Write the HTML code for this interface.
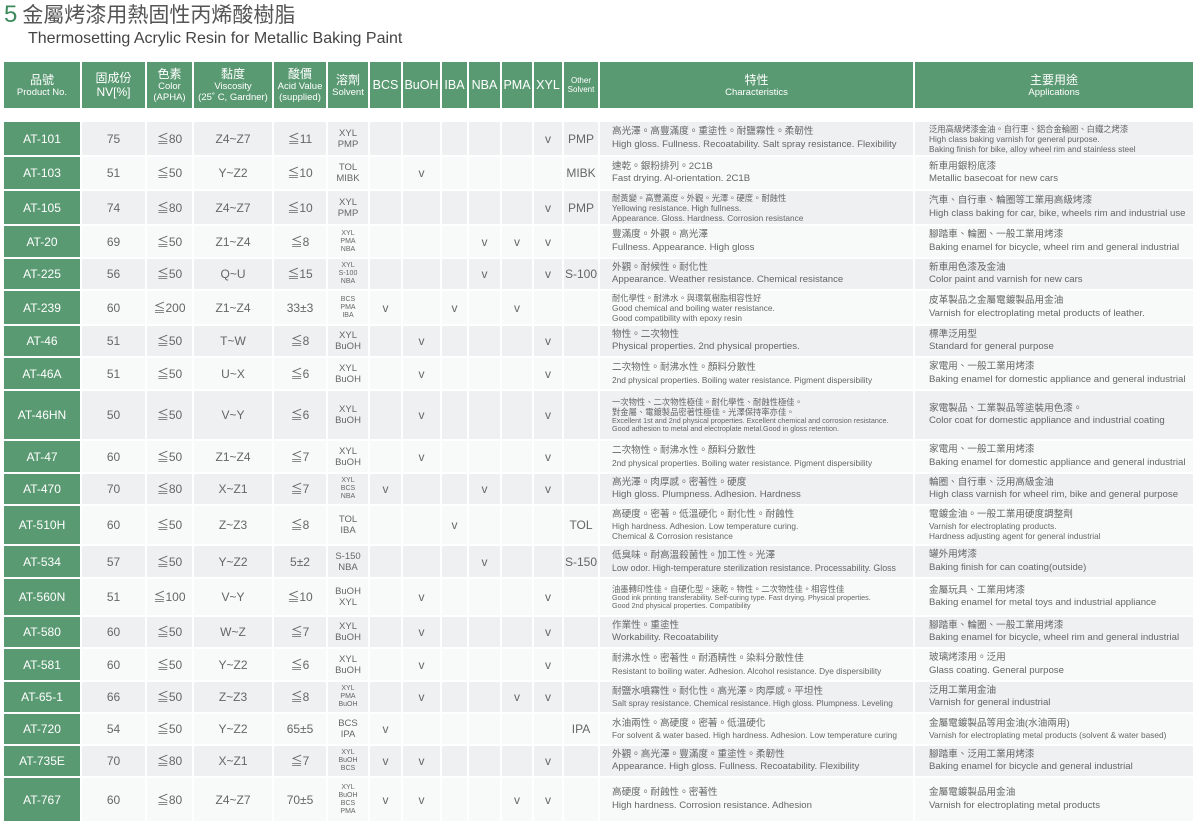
<!DOCTYPE html>
<html><head><meta charset="utf-8"><style>
*{margin:0;padding:0;box-sizing:border-box}
body{width:1200px;height:831px;background:#fff;font-family:"Liberation Sans","Noto Sans CJK TC",sans-serif;color:#666;position:relative;overflow:hidden}
.t1{position:absolute;left:4px;top:1px;font-size:21px;color:#555;white-space:nowrap;line-height:28px}
.t1 b{font-weight:normal;color:#3d8a5c;font-size:24px;margin-right:5px}
.t2{position:absolute;left:28px;top:30px;font-size:16px;color:#444;white-space:nowrap;line-height:18px}
table{position:absolute;left:2px;border-collapse:separate;border-spacing:2px;table-layout:fixed}
td{text-align:center;vertical-align:middle;font-size:12px;white-space:nowrap;overflow:hidden;line-height:14px}
#hd{top:60px}
#hd td{background:#5a9a72;color:#fff;height:46px;font-size:9.5px;line-height:11px}
#hd td .c{font-size:12px;line-height:14px;display:block}
#hd td.b{font-size:12.5px}
#bd{top:120px}
#bd tr:nth-child(odd) td{background:#eef0f1}
#bd tr:nth-child(even) td{background:#f8f9f9}
#bd td.p{background:#5a9a72 !important;color:#fff;font-size:12px}
td.sv{font-size:9.5px;line-height:11px}
td.sv.s{font-size:7px;line-height:8px}
td.ch,td.ap{text-align:left;padding-left:12px;font-size:9.6px;line-height:12.5px}
td.ap{padding-left:14px}
td div{display:block}
.sm{font-size:8.3px;line-height:10px}
.xs{font-size:7.2px;line-height:8.5px}
</style></head><body>
<div class="t1"><b>5</b>金屬烤漆用熱固性丙烯酸樹脂</div>
<div class="t2">Thermosetting Acrylic Resin for Metallic Baking Paint</div>
<table id="hd"><colgroup><col style="width:76px"><col style="width:63px"><col style="width:45px"><col style="width:78px"><col style="width:52px"><col style="width:40px"><col style="width:31px"><col style="width:37px"><col style="width:25px"><col style="width:31px"><col style="width:30px"><col style="width:28px"><col style="width:34px"><col style="width:313px"><col style="width:278px"></colgroup>
<tr><td><span class="c">品號</span>Product No.</td><td><span class="c">固成份</span><span class="c">NV[%]</span></td><td><span class="c">色素</span>Color<br>(APHA)</td><td><span class="c">黏度</span>Viscosity<br>(25˚ C, Gardner)</td><td><span class="c">酸價</span>Acid Value<br>(supplied)</td><td><span class="c">溶劑</span>Solvent</td><td class="b">BCS</td><td class="b">BuOH</td><td class="b">IBA</td><td class="b">NBA</td><td class="b">PMA</td><td class="b">XYL</td><td style="font-size:8px;line-height:9px">Other<br>Solvent</td><td><span class="c">特性</span>Characteristics</td><td><span class="c">主要用途</span>Applications</td></tr>
</table>
<table id="bd"><colgroup><col style="width:76px"><col style="width:63px"><col style="width:45px"><col style="width:78px"><col style="width:52px"><col style="width:40px"><col style="width:31px"><col style="width:37px"><col style="width:25px"><col style="width:31px"><col style="width:30px"><col style="width:28px"><col style="width:34px"><col style="width:313px"><col style="width:278px"></colgroup>
<tr style="height:33px"><td class="p">AT-101</td><td>75</td><td>≦80</td><td>Z4~Z7</td><td>≦11</td><td class="sv">XYL<br>PMP</td><td></td><td></td><td></td><td></td><td></td><td>v</td><td>PMP</td><td class="ch">高光澤。高豐滿度。重塗性。耐鹽霧性。柔韌性<br>High gloss. Fullness. Recoatability. Salt spray resistance. Flexibility</td><td class="ap"><div class="sm">泛用高級烤漆金油。自行車、鋁合金輪圈、白鐵之烤漆<br>High class baking varnish for general purpose.<br>Baking finish for bike, alloy wheel rim and stainless steel</div></td></tr>
<tr style="height:32px"><td class="p">AT-103</td><td>51</td><td>≦50</td><td>Y~Z2</td><td>≦10</td><td class="sv">TOL<br>MIBK</td><td></td><td>v</td><td></td><td></td><td></td><td></td><td>MIBK</td><td class="ch">速乾。銀粉排列。2C1B<br>Fast drying. Al-orientation. 2C1B</td><td class="ap">新車用銀粉底漆<br>Metallic basecoat for new cars</td></tr>
<tr style="height:33px"><td class="p">AT-105</td><td>74</td><td>≦80</td><td>Z4~Z7</td><td>≦10</td><td class="sv">XYL<br>PMP</td><td></td><td></td><td></td><td></td><td></td><td>v</td><td>PMP</td><td class="ch"><div class="sm">耐黃變。高豐滿度。外觀。光澤。硬度。耐蝕性<br>Yellowing resistance. High fullness.<br>Appearance. Gloss. Hardness. Corrosion resistance</div></td><td class="ap">汽車、自行車、輪圈等工業用高級烤漆<br>High class baking for car, bike, wheels rim and industrial use</td></tr>
<tr style="height:31px"><td class="p">AT-20</td><td>69</td><td>≦50</td><td>Z1~Z4</td><td>≦8</td><td class="sv s">XYL<br>PMA<br>NBA</td><td></td><td></td><td></td><td>v</td><td>v</td><td>v</td><td></td><td class="ch">豐滿度。外觀。高光澤<br>Fullness. Appearance. High gloss</td><td class="ap">腳踏車、輪圈、一般工業用烤漆<br>Baking enamel for bicycle, wheel rim and general industrial</td></tr>
<tr style="height:30px"><td class="p">AT-225</td><td>56</td><td>≦50</td><td>Q~U</td><td>≦15</td><td class="sv s">XYL<br>S-100<br>NBA</td><td></td><td></td><td></td><td>v</td><td></td><td>v</td><td>S-100</td><td class="ch">外觀。耐候性。耐化性<br>Appearance. Weather resistance. Chemical resistance</td><td class="ap">新車用色漆及金油<br>Color paint and varnish for new cars</td></tr>
<tr style="height:33px"><td class="p">AT-239</td><td>60</td><td>≦200</td><td>Z1~Z4</td><td>33±3</td><td class="sv s">BCS<br>PMA<br>IBA</td><td>v</td><td></td><td>v</td><td></td><td>v</td><td></td><td></td><td class="ch"><div class="sm">耐化學性。耐沸水。與環氧樹脂相容性好<br>Good chemical and boiling water resistance.<br>Good compatibility with epoxy resin</div></td><td class="ap">皮革製品之金屬電鍍製品用金油<br>Varnish for electroplating metal products of leather.</td></tr>
<tr style="height:30px"><td class="p">AT-46</td><td>51</td><td>≦50</td><td>T~W</td><td>≦8</td><td class="sv">XYL<br>BuOH</td><td></td><td>v</td><td></td><td></td><td></td><td>v</td><td></td><td class="ch">物性。二次物性<br>Physical properties. 2nd physical properties.</td><td class="ap">標準泛用型<br>Standard for general purpose</td></tr>
<tr style="height:31px"><td class="p">AT-46A</td><td>51</td><td>≦50</td><td>U~X</td><td>≦6</td><td class="sv">XYL<br>BuOH</td><td></td><td>v</td><td></td><td></td><td></td><td>v</td><td></td><td class="ch"><div>二次物性。耐沸水性。顏料分散性</div><div class="sm">2nd physical properties. Boiling water resistance. Pigment dispersibility</div></td><td class="ap">家電用、一般工業用烤漆<br>Baking enamel for domestic appliance and general industrial</td></tr>
<tr style="height:48px"><td class="p">AT-46HN</td><td>50</td><td>≦50</td><td>V~Y</td><td>≦6</td><td class="sv">XYL<br>BuOH</td><td></td><td>v</td><td></td><td></td><td></td><td>v</td><td></td><td class="ch"><div class="sm">一次物性、二次物性極佳。耐化學性、耐蝕性極佳。<br>對金屬、電鍍製品密著性極佳。光澤保持率亦佳。</div><div class="xs">Excellent 1st and 2nd physical properties. Excellent chemical and corrosion resistance.<br>Good adhesion to metal and electroplate metal.Good in gloss retention.</div></td><td class="ap">家電製品、工業製品等塗裝用色漆。<br>Color coat for domestic appliance and industrial coating</td></tr>
<tr style="height:31px"><td class="p">AT-47</td><td>60</td><td>≦50</td><td>Z1~Z4</td><td>≦7</td><td class="sv">XYL<br>BuOH</td><td></td><td>v</td><td></td><td></td><td></td><td>v</td><td></td><td class="ch"><div>二次物性。耐沸水性。顏料分散性</div><div class="sm">2nd physical properties. Boiling water resistance. Pigment dispersibility</div></td><td class="ap">家電用、一般工業用烤漆<br>Baking enamel for domestic appliance and general industrial</td></tr>
<tr style="height:30px"><td class="p">AT-470</td><td>70</td><td>≦80</td><td>X~Z1</td><td>≦7</td><td class="sv s">XYL<br>BCS<br>NBA</td><td>v</td><td></td><td></td><td>v</td><td></td><td>v</td><td></td><td class="ch">高光澤。肉厚感。密著性。硬度<br>High gloss. Plumpness. Adhesion. Hardness</td><td class="ap">輪圈、自行車、泛用高級金油<br>High class varnish for wheel rim, bike and general purpose</td></tr>
<tr style="height:38px"><td class="p">AT-510H</td><td>60</td><td>≦50</td><td>Z~Z3</td><td>≦8</td><td class="sv">TOL<br>IBA</td><td></td><td></td><td>v</td><td></td><td></td><td></td><td>TOL</td><td class="ch"><div>高硬度。密著。低溫硬化。耐化性。耐蝕性</div><div class="sm">High hardness. Adhesion. Low temperature curing.<br>Chemical &amp; Corrosion resistance</div></td><td class="ap"><div>電鍍金油。一般工業用硬度調整劑</div><div class="sm">Varnish for electroplating products.<br>Hardness adjusting agent for general industrial</div></td></tr>
<tr style="height:31px"><td class="p">AT-534</td><td>57</td><td>≦50</td><td>Y~Z2</td><td>5±2</td><td class="sv">S-150<br>NBA</td><td></td><td></td><td></td><td>v</td><td></td><td></td><td>S-150</td><td class="ch"><div>低臭味。耐高溫殺菌性。加工性。光澤</div><div class="sm" style="font-size:8.8px">Low odor. High-temperature sterilization resistance. Processability. Gloss</div></td><td class="ap">罐外用烤漆<br>Baking finish for can coating(outside)</td></tr>
<tr style="height:36px"><td class="p">AT-560N</td><td>51</td><td>≦100</td><td>V~Y</td><td>≦10</td><td class="sv">BuOH<br>XYL</td><td></td><td>v</td><td></td><td></td><td></td><td>v</td><td></td><td class="ch"><div class="sm">油墨轉印性佳。自硬化型。速乾。物性。二次物性佳。相容性佳</div><div class="xs">Good ink printing transferability. Self-curing type. Fast drying. Physical properties.<br>Good 2nd physical properties. Compatibility</div></td><td class="ap">金屬玩具、工業用烤漆<br>Baking enamel for metal toys and industrial appliance</td></tr>
<tr style="height:30px"><td class="p">AT-580</td><td>60</td><td>≦50</td><td>W~Z</td><td>≦7</td><td class="sv">XYL<br>BuOH</td><td></td><td>v</td><td></td><td></td><td></td><td>v</td><td></td><td class="ch">作業性。重塗性<br>Workability. Recoatability</td><td class="ap">腳踏車、輪圈、一般工業用烤漆<br>Baking enamel for bicycle, wheel rim and general industrial</td></tr>
<tr style="height:31px"><td class="p">AT-581</td><td>60</td><td>≦50</td><td>Y~Z2</td><td>≦6</td><td class="sv">XYL<br>BuOH</td><td></td><td>v</td><td></td><td></td><td></td><td>v</td><td></td><td class="ch"><div>耐沸水性。密著性。耐酒精性。染料分散性佳</div><div class="sm">Resistant to boiling water. Adhesion. Alcohol resistance. Dye dispersibility</div></td><td class="ap">玻璃烤漆用。泛用<br>Glass coating. General purpose</td></tr>
<tr style="height:30px"><td class="p">AT-65-1</td><td>66</td><td>≦50</td><td>Z~Z3</td><td>≦8</td><td class="sv s">XYL<br>PMA<br>BuOH</td><td></td><td>v</td><td></td><td></td><td>v</td><td>v</td><td></td><td class="ch"><div>耐鹽水噴霧性。耐化性。高光澤。肉厚感。平坦性</div><div class="sm">Salt spray resistance. Chemical resistance. High gloss. Plumpness. Leveling</div></td><td class="ap">泛用工業用金油<br>Varnish for general industrial</td></tr>
<tr style="height:30px"><td class="p">AT-720</td><td>54</td><td>≦50</td><td>Y~Z2</td><td>65±5</td><td class="sv">BCS<br>IPA</td><td>v</td><td></td><td></td><td></td><td></td><td></td><td>IPA</td><td class="ch"><div>水油兩性。高硬度。密著。低溫硬化</div><div class="sm">For solvent &amp; water based. High hardness. Adhesion. Low temperature curing</div></td><td class="ap"><div>金屬電鍍製品等用金油(水油兩用)</div><div class="sm">Varnish for electroplating metal products (solvent &amp; water based)</div></td></tr>
<tr style="height:30px"><td class="p">AT-735E</td><td>70</td><td>≦80</td><td>X~Z1</td><td>≦7</td><td class="sv s">XYL<br>BuOH<br>BCS</td><td>v</td><td>v</td><td></td><td></td><td></td><td>v</td><td></td><td class="ch">外觀。高光澤。豐滿度。重塗性。柔韌性<br>Appearance. High gloss. Fullness. Recoatability. Flexibility</td><td class="ap">腳踏車、泛用工業用烤漆<br>Baking enamel for bicycle and general industrial</td></tr>
<tr style="height:43px"><td class="p">AT-767</td><td>60</td><td>≦80</td><td>Z4~Z7</td><td>70±5</td><td class="sv s">XYL<br>BuOH<br>BCS<br>PMA</td><td>v</td><td>v</td><td></td><td></td><td>v</td><td>v</td><td></td><td class="ch">高硬度。耐蝕性。密著性<br>High hardness. Corrosion resistance. Adhesion</td><td class="ap">金屬電鍍製品用金油<br>Varnish for electroplating metal products</td></tr>
</table>
</body></html>
